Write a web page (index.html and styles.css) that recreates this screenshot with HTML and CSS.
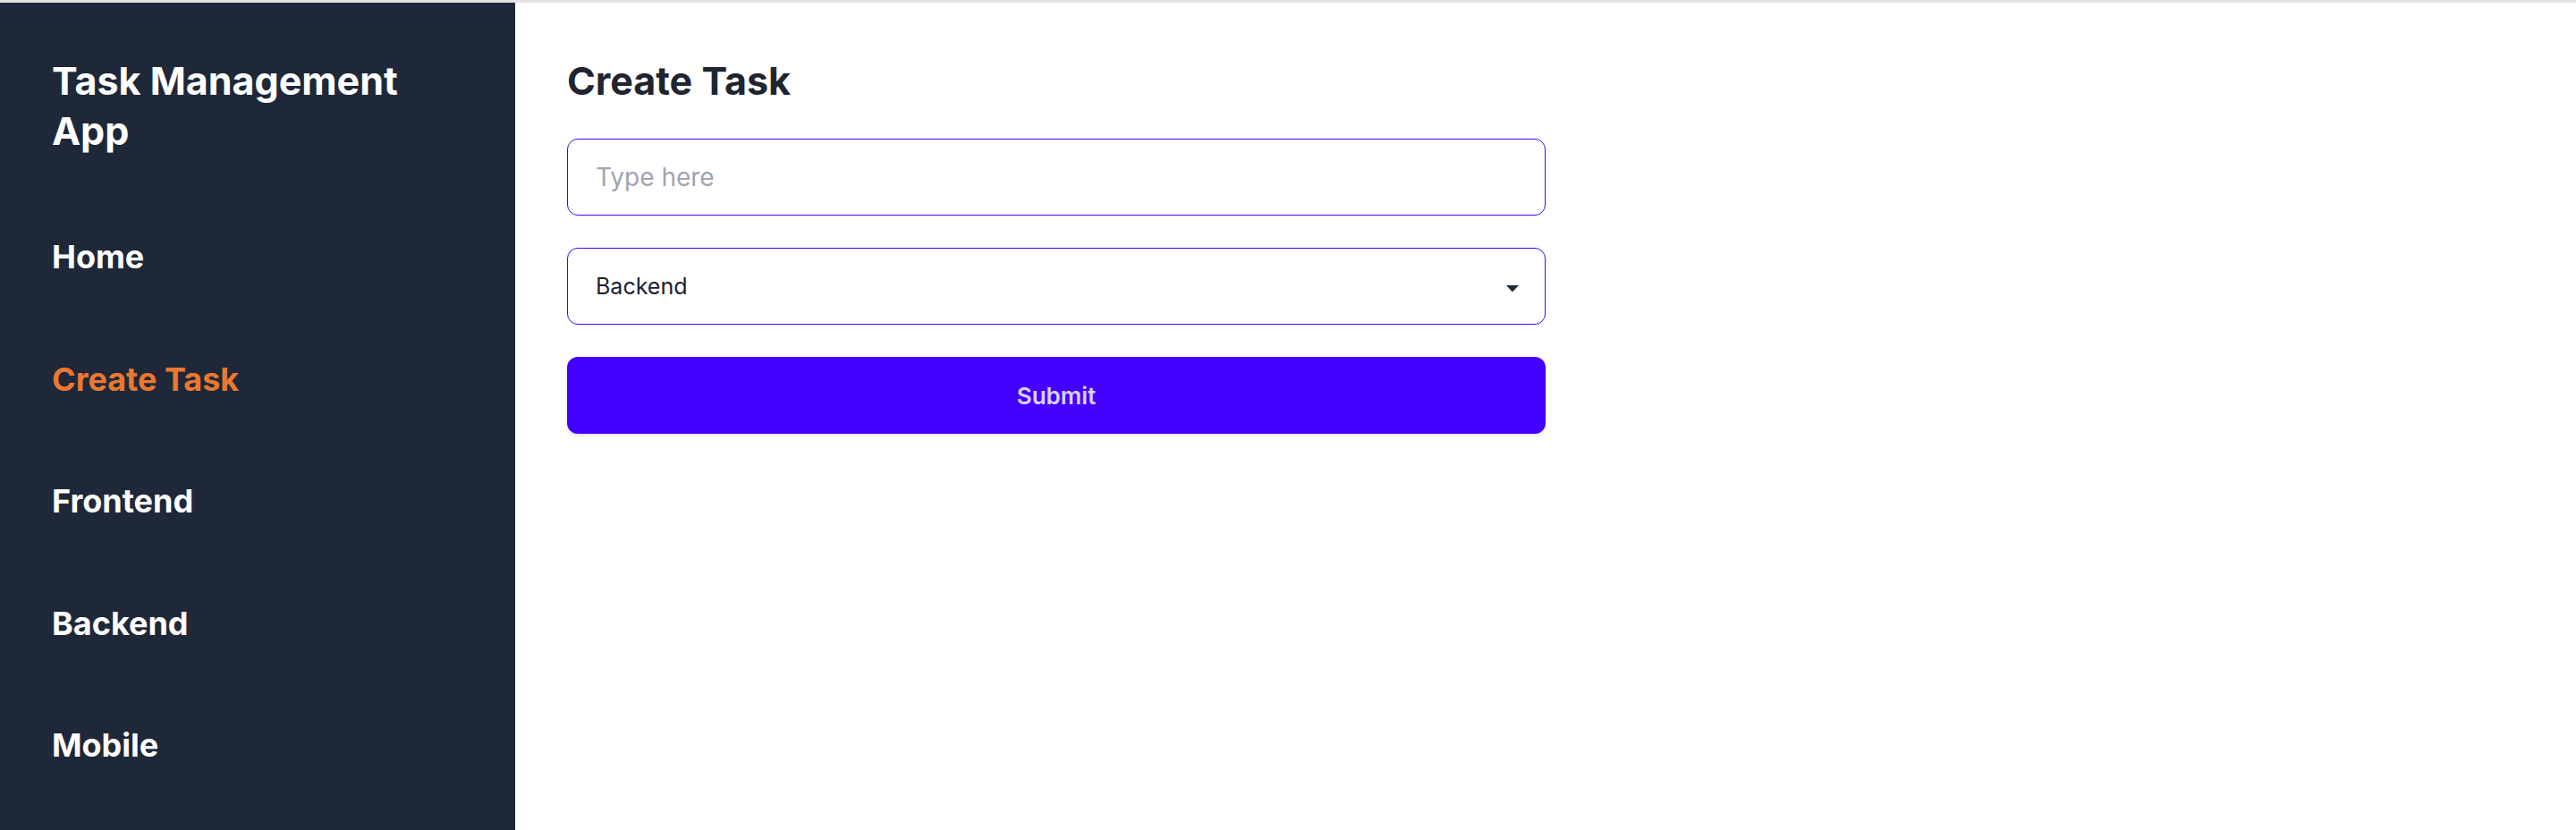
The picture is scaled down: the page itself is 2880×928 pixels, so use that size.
FILE: index.html
```html
<!DOCTYPE html>
<html lang="en">
<head>
<meta charset="utf-8">
<title>Task Management App</title>
<link rel="stylesheet" href="styles.css">
</head>
<body>
<div class="page">
  <aside class="sidebar">
    <h1 class="brand">Task Management App</h1>
    <nav class="nav">
      <a class="nav-link" href="#">Home</a>
      <a class="nav-link active" href="#">Create Task</a>
      <a class="nav-link" href="#">Frontend</a>
      <a class="nav-link" href="#">Backend</a>
      <a class="nav-link" href="#">Mobile</a>
    </nav>
  </aside>
  <main class="main">
    <h2 class="title">Create Task</h2>
    <form class="form">
      <input class="field" type="text" placeholder="Type here">
      <div class="select-wrap">
        <select class="field select">
          <option>Backend</option>
          <option>Frontend</option>
          <option>Mobile</option>
        </select>
        <svg class="caret" width="14" height="8" viewBox="0 0 14 8" aria-hidden="true"><path d="M0 0H14L7 7.5Z" fill="#1f2937"/></svg>
      </div>
      <button class="submit" type="button">Submit</button>
    </form>
  </main>
</div>
</body>
</html>
```
FILE: styles.css
```css
* { box-sizing: border-box; }
html, body { margin: 0; padding: 0; height: 100%; }
body {
  font-family: "Inter", "Noto Sans", sans-serif;
  background: #ffffff;
  color: #1f2937;
}
.page {
  display: flex;
  min-height: 100vh;
  border-top: 3px solid #e3e3e3;
}
.sidebar {
  width: 576px;
  flex: 0 0 576px;
  background: #1f2838;
  padding: 59px 40px 0 58px;
  display: flex;
  flex-direction: column;
}
.brand {
  margin: 0 0 86px;
  font-size: 43px;
  line-height: 56px;
  font-weight: 700;
  color: #ffffff;
  max-width: 400px;
}
.nav {
  display: flex;
  flex-direction: column;
  gap: 82.5px;
}
.nav-link {
  font-size: 36px;
  line-height: 54px;
  font-weight: 700;
  color: #ffffff;
  text-decoration: none;
}
.nav-link.active { color: #ea7830; }
.main {
  flex: 1;
  padding: 59px 0 0 58px;
}
.title {
  margin: 0 0 37px;
  font-size: 43px;
  line-height: 56px;
  font-weight: 700;
  color: #1f2530;
}
.form {
  width: 1094px;
  display: flex;
  flex-direction: column;
  gap: 36px;
}
.field {
  width: 100%;
  height: 86px;
  border: 1.5px solid #4400ff;
  border-radius: 12px;
  padding: 0 31px;
  background: #ffffff;
  font-family: "Inter", "Noto Sans", sans-serif;
  font-size: 28px;
  color: #1f2937;
  outline: none;
}
.field::placeholder { color: #9fa5b0; }
.select-wrap { position: relative; }
.select {
  -webkit-appearance: none;
  appearance: none;
  font-size: 25px;
  color: #1a202c;
}
.caret {
  position: absolute;
  right: 30px;
  top: 42px;
  pointer-events: none;
}
.submit {
  height: 86px;
  border: none;
  border-radius: 12px;
  background: #4400ff;
  color: #d8d3ff;
  font-family: "Inter", "Noto Sans", sans-serif;
  font-size: 26px;
  font-weight: 600;
  box-shadow: 0 2px 4px rgba(0, 0, 0, 0.12);
  cursor: pointer;
}
```
